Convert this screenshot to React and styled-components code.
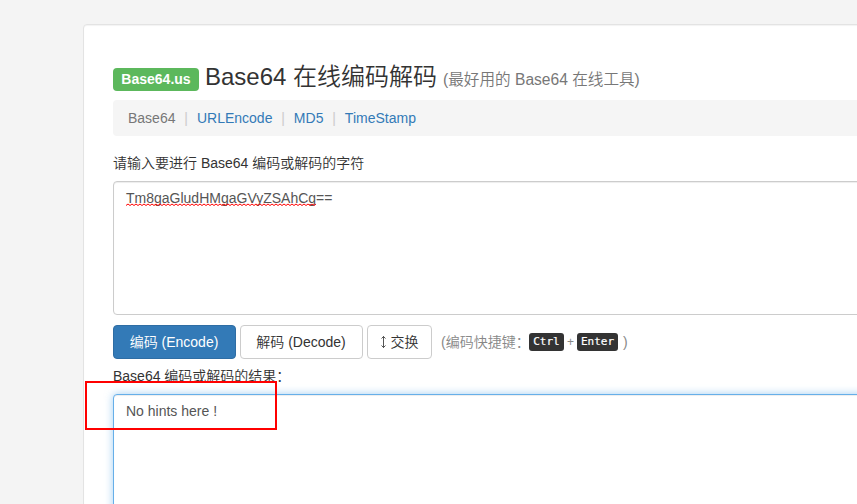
import React from "react";
import styled, { createGlobalStyle } from "styled-components";

const GlobalStyle = createGlobalStyle`
  *, *::before, *::after { box-sizing: border-box; }
  html, body { margin: 0; height: 100%; overflow: hidden; }
  body {
    background: #f4f4f4;
    color: #333;
    font: 350 14px/20px "Liberation Sans", "Noto Sans CJK SC", sans-serif;
  }
`;

const Page = styled.div`
  height: 504px;
  padding: 24px 0 0 83px;
  overflow: hidden;
`;

const Card = styled.main`
  position: relative;
  width: 1170px;
  height: 700px;
  padding: 35px 29px;
  background: #fff;
  border: 1px solid #e3e3e3;
  border-radius: 4px;
  box-shadow: inset 0 1px 1px rgba(0, 0, 0, 0.05);
`;

const Header = styled.h1`
  display: flex;
  align-items: flex-start;
  height: 40px;
  margin: 0;
  font-size: 24px;
  font-weight: 350;
  line-height: 30px;
  white-space: nowrap;
`;

const Badge = styled.span`
  width: 86px;
  height: 23px;
  margin: 8px 6px 0 0;
  border-radius: 4px;
  background: #5cb85c;
  color: #fff;
  font: 700 14px/22px "Liberation Sans", sans-serif;
  text-align: center;
`;

const Title = styled.span`
  margin-top: 2px;
  line-height: 30px;
`;

const Subtitle = styled.small`
  margin: 5px 0 0 6px;
  color: #777;
  font-size: 15.6px;
`;

const Nav = styled.nav`
  display: flex;
  align-items: center;
  height: 36px;
  padding-left: 15px;
  background: #f5f5f5;
  border-radius: 4px;
`;

const NavItem = styled.span`
  color: ${(p) => (p.$active ? "#777" : "#337ab7")};

  &:not(:first-child)::before {
    content: "|";
    padding: 0 9px 0 8.8px;
    color: #ccc;
  }
`;

const Label = styled.label`
  display: block;
  height: 20px;
  margin-top: ${(p) => p.$top}px;
  white-space: nowrap;
`;

const TextBox = styled.div`
  height: 134px;
  margin-top: ${(p) => p.$top}px;
  padding: 6px 12px;
  border: 1px solid ${(p) => (p.$focused ? "#66afe9" : "#ccc")};
  border-radius: 4px;
  background: #fff;
  box-shadow: ${(p) =>
    p.$focused
      ? "inset 0 1px 1px rgba(0,0,0,.075), 0 0 8px rgba(102,175,233,.6)"
      : "inset 0 1px 1px rgba(0,0,0,.075)"};
  color: #555;
`;

const Misspelled = styled.span`
  position: relative;
  display: inline-block;
`;

const Squiggle = styled.svg`
  position: absolute;
  left: 0;
  top: 15px;
  width: 100%;
  height: 3px;
`;

const Actions = styled.div`
  display: flex;
  align-items: center;
  gap: 4px;
  height: 34px;
  margin-top: 10px;
`;

const Button = styled.button`
  display: flex;
  align-items: center;
  justify-content: center;
  gap: 4px;
  width: ${(p) => p.$width}px;
  height: 34px;
  padding: 0 1px 0 0;
  border: 1px solid ${(p) => (p.$primary ? "#2e6da4" : "#ccc")};
  border-radius: 4px;
  background: ${(p) => (p.$primary ? "#337ab7" : "#fff")};
  color: ${(p) => (p.$primary ? "#fff" : "#333")};
  font: inherit;
  white-space: nowrap;
`;

const Shortcut = styled.div`
  display: flex;
  align-items: center;
  height: 34px;
  margin-left: 5px;
  color: #888;
  white-space: nowrap;
`;

const ShortcutLabel = styled.span`
  width: 88px;
`;

const Key = styled.kbd`
  width: ${(p) => p.$width}px;
  height: 18px;
  border-radius: 3px;
  background: #333;
  color: #fff;
  font: 11px/18px "DejaVu Sans Mono", monospace;
  -webkit-text-stroke: 0.2px #fff;
  text-align: center;
`;

const Plus = styled.span`
  width: 13px;
  font-size: 12px;
  text-align: center;
`;

const Closing = styled.span`
  margin-left: 5px;
`;

const Highlight = styled.div`
  position: absolute;
  left: 1px;
  top: 356px;
  width: 192px;
  height: 49px;
  border: 2px solid #f00;
`;

const squigglePoints = Array.from(
  { length: 96 },
  (_, i) => `${i * 2},${i % 2 ? 1 : 2.5}`
).join(" ");

export default function App() {
  return (
    <>
      <GlobalStyle />
      <Page>
        <Card>
          <Header>
            <Badge>Base64.us</Badge>
            <Title>Base64 在线编码解码</Title>
            <Subtitle>(最好用的 Base64 在线工具)</Subtitle>
          </Header>
          <Nav>
            <NavItem $active>Base64</NavItem>
            <NavItem>URLEncode</NavItem>
            <NavItem>MD5</NavItem>
            <NavItem>TimeStamp</NavItem>
          </Nav>
          <Label $top={17}>请输入要进行 Base64 编码或解码的字符</Label>
          <TextBox $top={8}>
            <Misspelled>
              Tm8gaGludHMgaGVyZSAhCg
              <Squiggle>
                <polyline points={squigglePoints} fill="none" stroke="#f00" strokeWidth="1" />
              </Squiggle>
            </Misspelled>
            ==
          </TextBox>
          <Actions>
            <Button $primary $width={123}>编码 (Encode)</Button>
            <Button $width={123}>解码 (Decode)</Button>
            <Button $width={65}>
              <svg width="7" height="14" viewBox="0 0 7 14" fill="none" stroke="#555">
                <path d="M3.5 1v12M1.5 3.5l2-2 2 2M1.5 10.5l2 2 2-2" />
              </svg>
              交换
            </Button>
            <Shortcut>
              <ShortcutLabel>(编码快捷键：</ShortcutLabel>
              <Key $width={35}>Ctrl</Key>
              <Plus>+</Plus>
              <Key $width={41}>Enter</Key>
              <Closing>)</Closing>
            </Shortcut>
          </Actions>
          <Label $top={7}>Base64 编码或解码的结果：</Label>
          <TextBox $top={8} $focused>No hints here !</TextBox>
          <Highlight />
        </Card>
      </Page>
    </>
  );
}
